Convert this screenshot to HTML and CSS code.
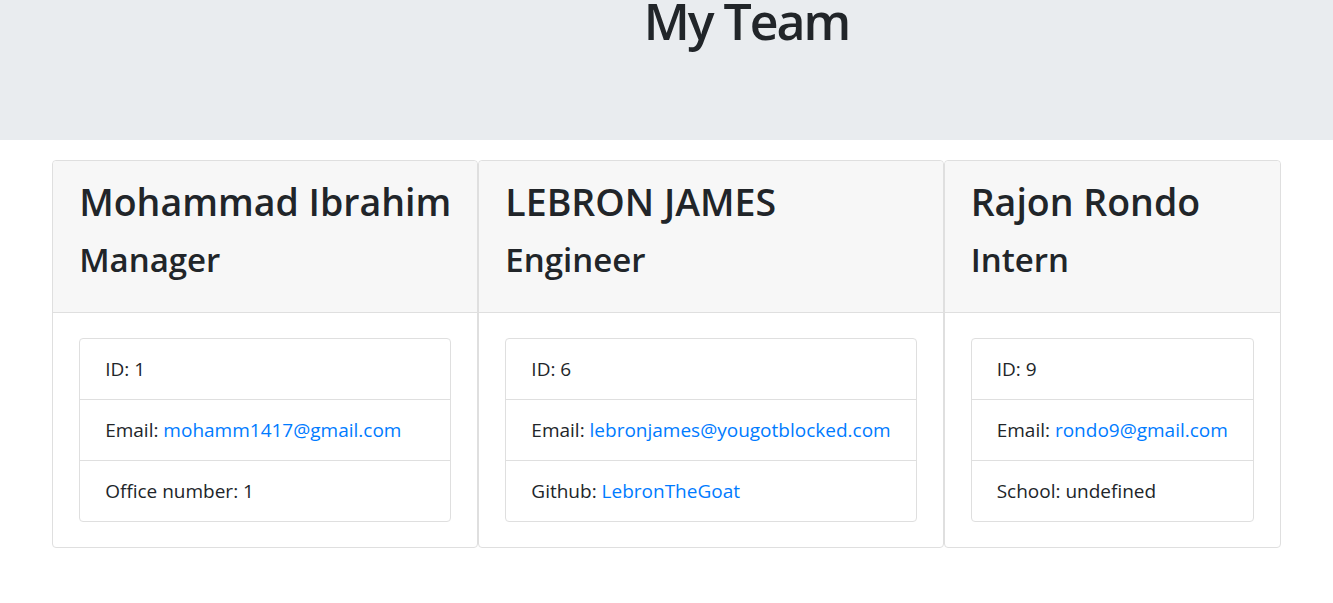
FILE: index.html
```html
<!DOCTYPE html>
<html>
<head>
<meta charset="utf-8">
<title>My Team</title>
<link rel="stylesheet" href="styles.css">
</head>
<body>
<header class="jumbotron">
  <h1 class="title">My Team</h1>
</header>
<main class="team">
  <section class="card">
    <div class="card-header">
      <h2 class="name">Mohammad Ibrahim</h2>
      <h3 class="role">Manager</h3>
    </div>
    <div class="card-body">
      <ul class="list">
        <li class="item">ID: 1</li>
        <li class="item">Email: <a href="#">mohamm1417@gmail.com</a></li>
        <li class="item">Office number: 1</li>
      </ul>
    </div>
  </section>
  <section class="card">
    <div class="card-header">
      <h2 class="name">LEBRON JAMES</h2>
      <h3 class="role">Engineer</h3>
    </div>
    <div class="card-body">
      <ul class="list">
        <li class="item">ID: 6</li>
        <li class="item">Email: <a href="#">lebronjames@yougotblocked.com</a></li>
        <li class="item">Github: <a href="#">LebronTheGoat</a></li>
      </ul>
    </div>
  </section>
  <section class="card">
    <div class="card-header">
      <h2 class="name">Rajon Rondo</h2>
      <h3 class="role">Intern</h3>
    </div>
    <div class="card-body">
      <ul class="list">
        <li class="item">ID: 9</li>
        <li class="item">Email: <a href="#">rondo9@gmail.com</a></li>
        <li class="item">School: undefined</li>
      </ul>
    </div>
  </section>
</main>
</body>
</html>
```
FILE: styles.css
```css
* { box-sizing: border-box; }
body {
  margin: 0;
  font-family: "Open Sans", "Noto Sans", sans-serif;
  font-size: 19px;
  color: #212529;
  background: #fff;
}
.jumbotron {
  background: #e9ecef;
  height: 140px;
  padding-left: 160px;
  text-align: center;
}
.title {
  margin: 0;
  font-size: 50px;
  font-weight: 600;
  line-height: 42px;
  letter-spacing: -2px;
}
.team {
  display: flex;
  justify-content: center;
  margin-top: 20px;
}
.card {
  border: 1px solid #dfdfdf;
  border-radius: 4px;
  background: #fff;
}
.card-header {
  background: #f7f7f7;
  border-bottom: 1px solid #dfdfdf;
  padding: 19px 26px 32px;
  border-radius: 4px 4px 0 0;
}
.name {
  margin: 0 0 16px;
  font-size: 37.5px;
  font-weight: 600;
  line-height: 44px;
}
.role {
  margin: 0;
  font-size: 33px;
  font-weight: 600;
  line-height: 40px;
}
.card-body {
  padding: 25px 26px;
}
.list {
  list-style: none;
  margin: 0;
  padding: 0;
  border: 1px solid #dfdfdf;
  border-radius: 4px;
}
.item {
  padding: 17px 25px;
  line-height: 26px;
  white-space: nowrap;
}
.item + .item { border-top: 1px solid #dfdfdf; }
.item a { color: #007bff; text-decoration: none; }
```
